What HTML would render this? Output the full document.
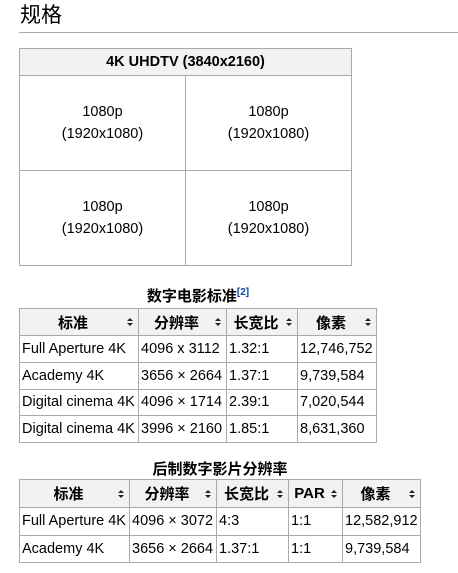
<!DOCTYPE html>
<html><head><meta charset="utf-8"><style>
body{margin:0;width:458px;height:573px;background:#fff;font-family:"Liberation Sans","Noto Sans CJK SC",sans-serif;color:#000;position:relative;overflow:hidden}
h2{position:absolute;left:20px;top:2px;margin:0;font-weight:normal;font-size:21px;line-height:28px}
.rule{position:absolute;left:19px;top:32px;width:439px;height:1px;background:#aaa}
table{position:absolute;border-collapse:collapse;font-size:14.5px;table-layout:fixed}
td,th{border:1px solid #aaa;padding:0 2px;white-space:nowrap;overflow:hidden}
th{background:#f2f2f2;font-weight:bold;text-align:center;font-size:15px}
.s{position:relative;padding-right:14px}
.s:after{content:"";position:absolute;right:5px;top:50%;margin-top:-4px;border:3.5px solid transparent;border-bottom:3.5px solid #222;border-top:none;height:0}
.s:before{content:"";position:absolute;right:5px;top:50%;margin-top:1px;border:3.5px solid transparent;border-top:3.5px solid #222;border-bottom:none;height:0}
.cap{position:absolute;font-weight:bold;font-size:15px;text-align:center}
sup{color:#0645ad;font-size:10px}
.c{text-align:center;line-height:22px}
</style></head><body>
<h2>规格</h2><div class="rule"></div>
<table style="left:19px;top:48px;width:333px;height:218px">
<colgroup><col style="width:166px"><col></colgroup>
<tr style="height:27px"><th colspan="2" style="font-size:14.5px">4K UHDTV (3840x2160)</th></tr>
<tr><td class="c">1080p<br>(1920x1080)</td><td class="c">1080p<br>(1920x1080)</td></tr>
<tr><td class="c">1080p<br>(1920x1080)</td><td class="c">1080p<br>(1920x1080)</td></tr>
</table>
<div class="cap" style="left:19px;top:285px;width:358px">数字电影标准<sup>[2]</sup></div>
<table style="left:19px;top:308px;width:358px;height:135px">
<colgroup><col style="width:119px"><col style="width:88px"><col style="width:71px"><col></colgroup>
<tr style="height:27px"><th class="s">标准</th><th class="s">分辨率</th><th class="s">长宽比</th><th class="s">像素</th></tr>
<tr><td>Full Aperture 4K</td><td>4096 x 3112</td><td>1.32:1</td><td>12,746,752</td></tr>
<tr><td>Academy 4K</td><td>3656 × 2664</td><td>1.37:1</td><td>9,739,584</td></tr>
<tr><td>Digital cinema 4K</td><td>4096 × 1714</td><td>2.39:1</td><td>7,020,544</td></tr>
<tr><td>Digital cinema 4K</td><td>3996 × 2160</td><td>1.85:1</td><td>8,631,360</td></tr>
</table>
<div class="cap" style="left:19px;top:458px;width:402px">后制数字影片分辨率</div>
<table style="left:19px;top:479px;width:402px;height:84px">
<colgroup><col style="width:110px"><col style="width:87px"><col style="width:72px"><col style="width:54px"><col></colgroup>
<tr style="height:28px"><th class="s">标准</th><th class="s">分辨率</th><th class="s">长宽比</th><th class="s">PAR</th><th class="s">像素</th></tr>
<tr><td>Full Aperture 4K</td><td>4096 × 3072</td><td>4:3</td><td>1:1</td><td>12,582,912</td></tr>
<tr><td>Academy 4K</td><td>3656 × 2664</td><td>1.37:1</td><td>1:1</td><td>9,739,584</td></tr>
</table>
</body></html>
